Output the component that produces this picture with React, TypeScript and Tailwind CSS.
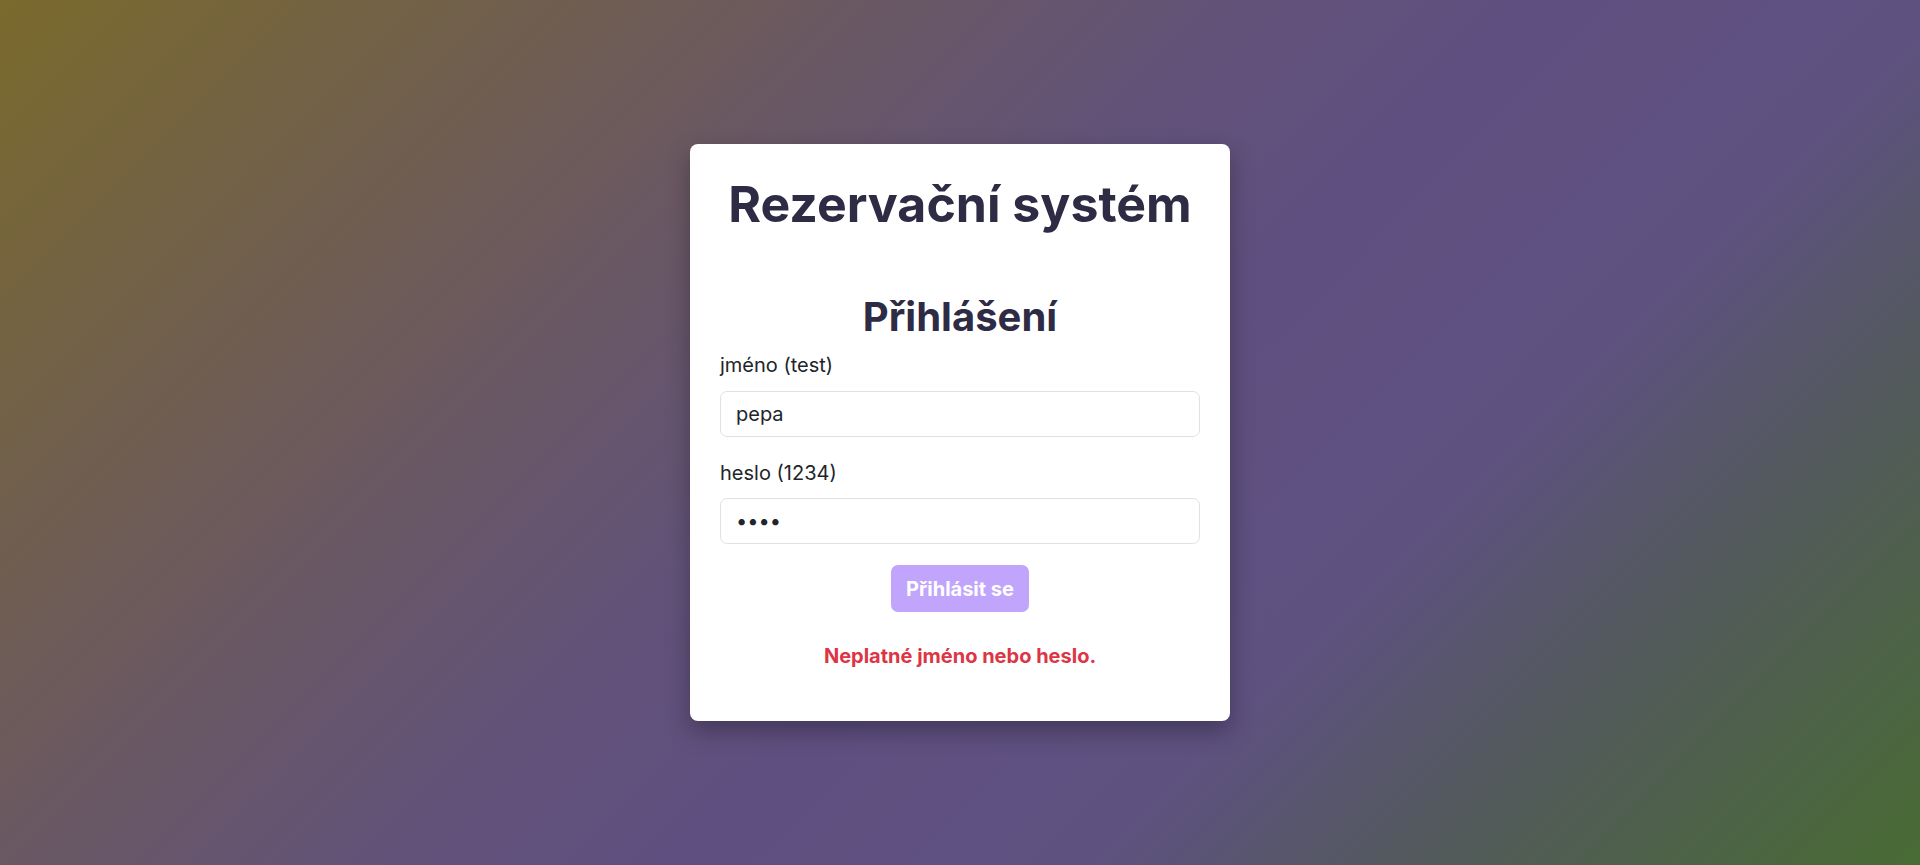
import React from "react";

export default function App() {
  return (
    <div
      className="flex h-screen items-center justify-center overflow-hidden bg-[linear-gradient(135deg,#7a6a2c_0%,#6c5a5c_27%,#625279_45%,#5f4f80_55%,#5e5180_70%,#535a5c_82%,#486b33_100%)]"
      style={{ fontFamily: "Inter, 'Noto Sans', sans-serif" }}
    >
      <div className="w-[540px] rounded-[8px] bg-white px-[30px] pt-[30px] pb-[50px] shadow-[0_10px_25px_rgba(0,0,0,0.3)]">
        <h1 className="text-center text-[50px] leading-[60px] font-bold text-[#2e2b44]">Rezervační systém</h1>
        <h2 className="mt-[59px] text-center text-[40px] leading-[48px] font-bold text-[#2e2b44]">Přihlášení</h2>

        <form onSubmit={(e) => e.preventDefault()}>
          <label className="mt-[9px] block text-[20px] leading-[30px] text-[#212529]">jméno (test)</label>
          <input
            type="text"
            readOnly
            value="pepa"
            className="mt-[11px] block h-[46px] w-full rounded-[7px] border border-[#dee2e6] px-[15px] text-[20px] text-[#212529] outline-none"
          />

          <label className="mt-[21px] block text-[20px] leading-[30px] text-[#212529]">heslo (1234)</label>
          <input
            type="password"
            readOnly
            value="1234"
            className="mt-[10px] block h-[46px] w-full rounded-[7px] border border-[#dee2e6] px-[15px] text-[20px] text-[#212529] outline-none"
          />

          <div className="mt-[21px] flex justify-center">
            <button
              type="submit"
              className="h-[47px] rounded-[7px] bg-[#c1a5fd] px-[15px] text-[20px] leading-[30px] font-bold text-white"
            >
              Přihlásit se
            </button>
          </div>
        </form>

        <p className="mt-[29px] text-center text-[20px] leading-[30px] font-bold text-[#dc3545]">
          Neplatné jméno nebo heslo.
        </p>
      </div>
    </div>
  );
}
